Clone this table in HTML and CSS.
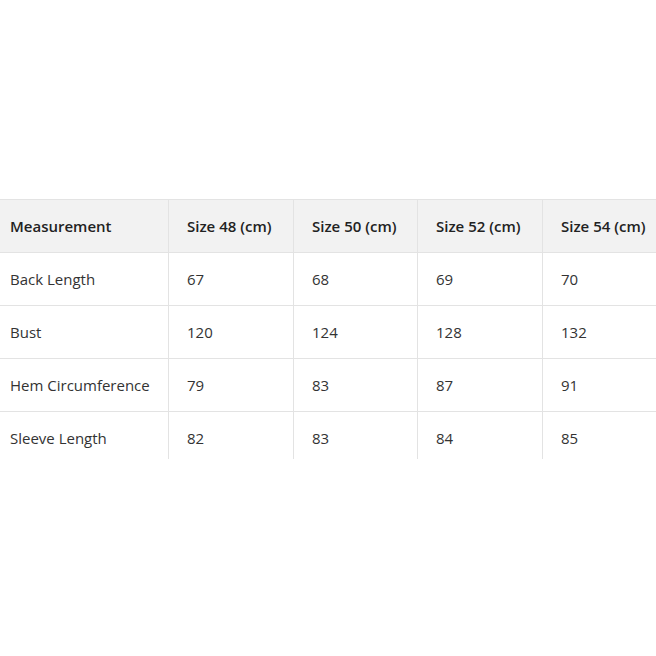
FILE: index.html
```html
<!DOCTYPE html>
<html>
<head>
<meta charset="utf-8">
<link rel="stylesheet" href="styles.css">
</head>
<body>
<div class="frame">
  <table class="size-table">
    <colgroup>
      <col class="c1"><col class="c2"><col class="c3"><col class="c4"><col class="c5">
    </colgroup>
    <thead>
      <tr><th>Measurement</th><th>Size 48 (cm)</th><th>Size 50 (cm)</th><th>Size 52 (cm)</th><th>Size 54 (cm)</th></tr>
    </thead>
    <tbody>
      <tr><td>Back Length</td><td>67</td><td>68</td><td>69</td><td>70</td></tr>
      <tr><td>Bust</td><td>120</td><td>124</td><td>128</td><td>132</td></tr>
      <tr><td>Hem Circumference</td><td>79</td><td>83</td><td>87</td><td>91</td></tr>
      <tr><td>Sleeve Length</td><td>82</td><td>83</td><td>84</td><td>85</td></tr>
    </tbody>
  </table>
</div>
</body>
</html>
```
FILE: styles.css
```css
html, body {
  margin: 0;
  padding: 0;
  background: #fff;
  overflow: hidden;
}
.frame {
  margin-top: 199px;
  height: 260px;
  overflow: hidden;
  width: 656px;
}
.size-table {
  margin-left: -9px;
  border-collapse: collapse;
  table-layout: fixed;
  width: 700px;
  font-family: "Open Sans", "Noto Sans", sans-serif;
  font-size: 15px;
  color: #333;
}
.c1 { width: 177px; }
.c2 { width: 125px; }
.c3 { width: 124px; }
.c4 { width: 125px; }
.c5 { width: 149px; }
.size-table th,
.size-table td {
  border: 1px solid #e3e3e3;
  padding: 0 0 0 18px;
  height: 52px;
  text-align: left;
  vertical-align: middle;
  white-space: nowrap;
}
.size-table th {
  background: #f2f2f2;
  font-weight: 600;
  color: #222;
}
```
